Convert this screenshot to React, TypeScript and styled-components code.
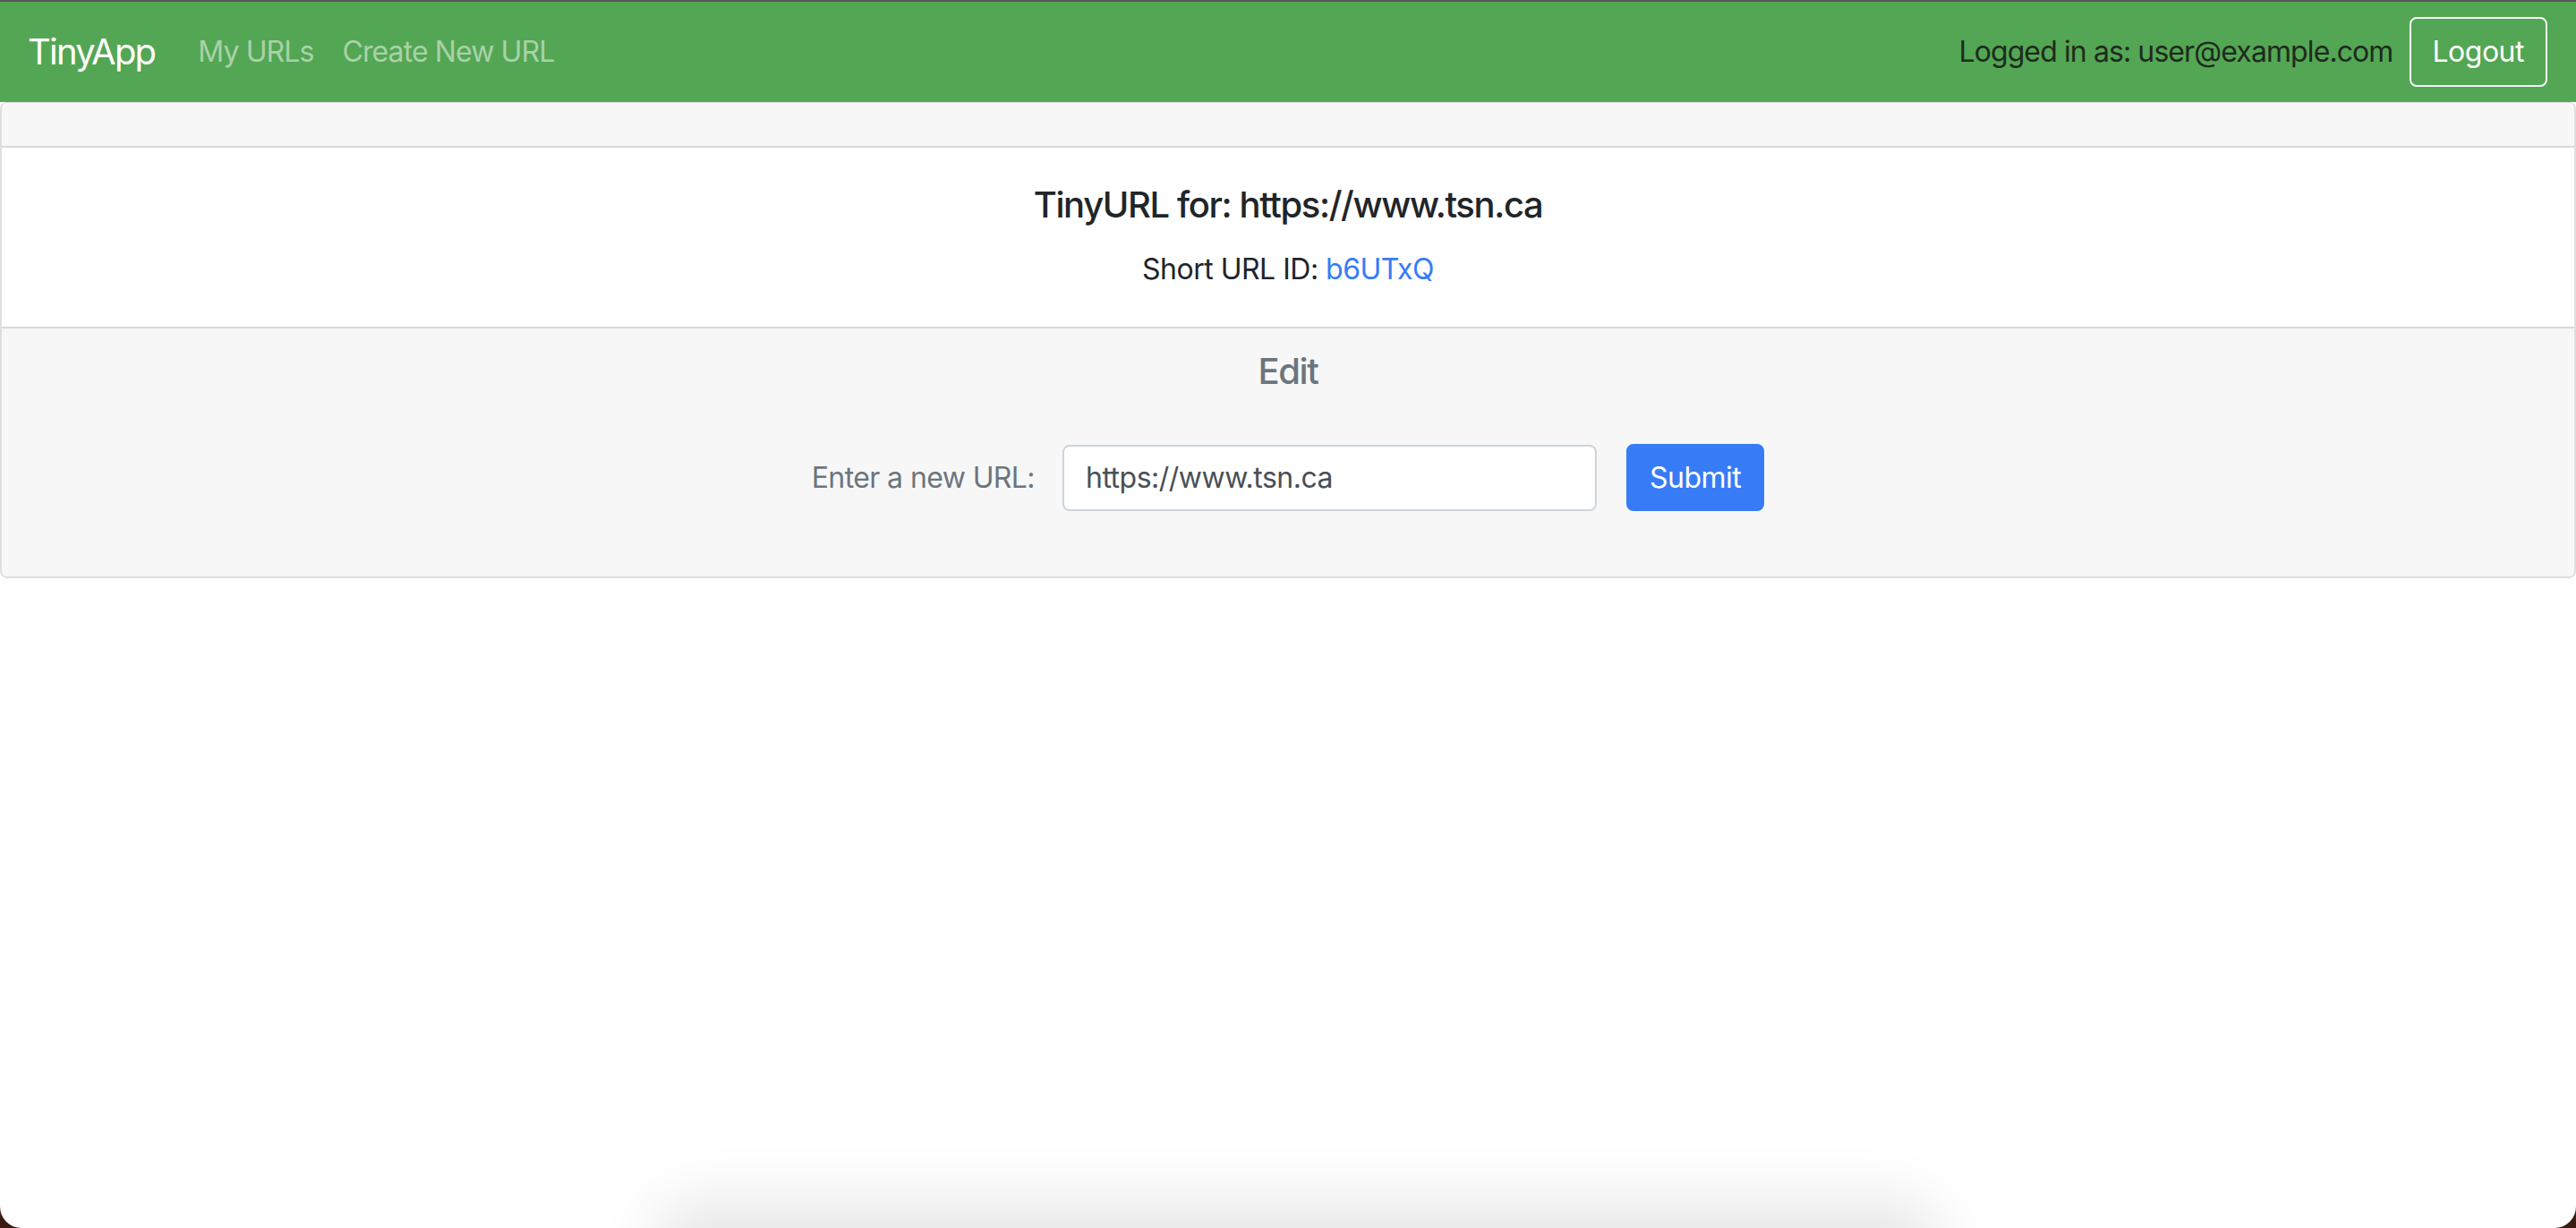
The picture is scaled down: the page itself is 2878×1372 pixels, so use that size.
import React from "react";
import styled, { createGlobalStyle } from "styled-components";

const GlobalStyle = createGlobalStyle`
  html,
  body {
    margin: 0;
    padding: 0;
    background: #3a1c12;
  }
  * {
    box-sizing: border-box;
  }
  body {
    font-family: Inter, "Noto Sans", "Liberation Sans", sans-serif;
    color: #212529;
  }
`;

const StyledWindow = styled.div`
  position: relative;
  min-height: 100vh;
  background: #ffffff;
  border-top: 2px solid #585858;
  border-radius: 0 0 24px 24px;
  overflow: hidden;
`;

const StyledNavbar = styled.nav`
  display: flex;
  align-items: center;
  justify-content: space-between;
  height: 112px;
  padding: 0 32px 0 31px;
  background-color: #53a653;
`;

const StyledNavGroup = styled.div`
  display: flex;
  align-items: center;
`;

const StyledBrand = styled.a`
  font-size: 40px;
  line-height: 60px;
  color: #ffffff;
  margin-right: 32px;
  text-decoration: none;
  letter-spacing: -1.8px;
`;

const StyledNavLink = styled.a`
  font-size: 32px;
  line-height: 48px;
  padding: 0 16px;
  color: rgba(255, 255, 255, 0.5);
  text-decoration: none;
  letter-spacing: -0.9px;
`;

const StyledUserText = styled.span`
  font-size: 32px;
  line-height: 48px;
  color: #1e2a1e;
  margin-right: 18px;
  letter-spacing: -0.9px;
`;

const StyledOutlineButton = styled.button`
  font-family: inherit;
  font-size: 32px;
  line-height: 48px;
  padding: 13px 24px;
  color: #ffffff;
  background: transparent;
  border: 2px solid #f8f9fa;
  border-radius: 8px;
  letter-spacing: -0.5px;
`;

const StyledCard = styled.div`
  border: 2px solid rgba(0, 0, 0, 0.125);
  border-top-width: 1px;
  border-radius: 8px;
  overflow: hidden;
`;

const StyledCardHeader = styled.div`
  height: 50px;
  background-color: #f7f7f7;
  border-bottom: 2px solid rgba(0, 0, 0, 0.125);
`;

const StyledCardBody = styled.div`
  padding: 40px;
  text-align: center;
`;

const StyledTitle = styled.h5<{ $muted?: boolean }>`
  margin: 0 0 24px;
  font-size: 40px;
  line-height: 48px;
  font-weight: 500;
  letter-spacing: -1.4px;
  color: ${(p) => (p.$muted ? "#6c757d" : "#212529")};
`;

const StyledText = styled.p`
  margin: 0;
  font-size: 32px;
  line-height: 48px;
  letter-spacing: -0.5px;
`;

const StyledLink = styled.a`
  color: #367cf6;
  text-decoration: none;
`;

const StyledCardFooter = styled.div`
  padding: 24px 40px;
  background-color: #f7f7f7;
  border-top: 2px solid rgba(0, 0, 0, 0.125);
  text-align: center;
`;

const StyledForm = styled.form`
  display: flex;
  align-items: center;
  justify-content: center;
  margin: 57px 0 49px;
`;

const StyledLabel = styled.label`
  font-size: 32px;
  line-height: 48px;
  color: #6c757d;
  margin-right: 31px;
  letter-spacing: -0.6px;
`;

const StyledInput = styled.input`
  width: 597px;
  height: 74px;
  padding: 0 24px;
  font-family: inherit;
  font-size: 32px;
  color: #495057;
  background: #ffffff;
  border: 2px solid #ced4da;
  border-radius: 8px;
  margin-right: 33px;
  letter-spacing: -0.5px;
  outline: none;
`;

const StyledSubmit = styled.button`
  height: 75px;
  padding: 0 24px;
  font-family: inherit;
  font-size: 32px;
  color: #ffffff;
  background-color: #377cf6;
  border: 2px solid #377cf6;
  border-radius: 8px;
  letter-spacing: -0.5px;
`;

const StyledDockShadow = styled.div`
  position: absolute;
  left: 760px;
  width: 1380px;
  bottom: -50px;
  height: 50px;
  border-radius: 30px;
  background: rgba(0, 0, 0, 0.1);
  box-shadow: 0 0 70px 30px rgba(0, 0, 0, 0.1);
  pointer-events: none;
`;

export default function App() {
  const shortUrl = {
    id: "b6UTxQ",
    longURL: "https://www.tsn.ca",
  };

  return (
    <>
      <GlobalStyle />
      <StyledWindow>
        <StyledNavbar>
          <StyledNavGroup>
            <StyledBrand href="#">TinyApp</StyledBrand>
            <StyledNavLink href="#">My URLs</StyledNavLink>
            <StyledNavLink href="#">Create New URL</StyledNavLink>
          </StyledNavGroup>
          <StyledNavGroup>
            <StyledUserText>Logged in as: user@example.com</StyledUserText>
            <StyledOutlineButton type="button">Logout</StyledOutlineButton>
          </StyledNavGroup>
        </StyledNavbar>

        <StyledCard>
          <StyledCardHeader />
          <StyledCardBody>
            <StyledTitle>TinyURL for: {shortUrl.longURL}</StyledTitle>
            <StyledText>
              Short URL ID: <StyledLink href="#">{shortUrl.id}</StyledLink>
            </StyledText>
          </StyledCardBody>
          <StyledCardFooter>
            <StyledTitle $muted>Edit</StyledTitle>
            <StyledForm onSubmit={(e) => e.preventDefault()}>
              <StyledLabel htmlFor="longURL">Enter a new URL:</StyledLabel>
              <StyledInput id="longURL" type="text" defaultValue={shortUrl.longURL} />
              <StyledSubmit type="submit">Submit</StyledSubmit>
            </StyledForm>
          </StyledCardFooter>
        </StyledCard>
        <StyledDockShadow />
      </StyledWindow>
    </>
  );
}
